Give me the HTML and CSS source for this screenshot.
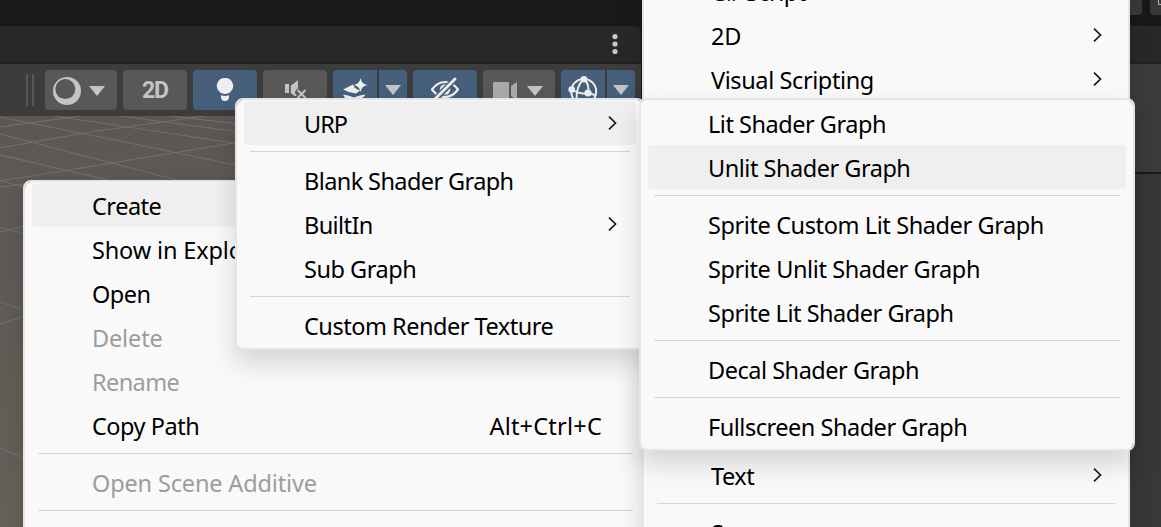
FILE: index.html
```html
<!DOCTYPE html>
<html lang="en">
<head>
<meta charset="utf-8">
<title>Scene</title>
<link rel="stylesheet" href="styles.css">
</head>
<body>
<div class="editor">
  <div class="scene-pane">
    <div class="pane-top"></div>
    <div class="tab-bar">
      <svg class="kebab" width="6" height="20" viewBox="0 0 6 20" fill="#c8c8c8"><circle cx="3" cy="2.6" r="2.6"/><circle cx="3" cy="10" r="2.6"/><circle cx="3" cy="17.5" r="2.6"/></svg>
    </div>
    <div class="toolbar">
      <div class="grip"></div>
      <div class="tool shading">
        <svg width="28" height="28" viewBox="0 0 28 28"><circle cx="14" cy="14" r="14" fill="#c4c4c4"/><circle cx="12.300" cy="12.100" r="10" fill="#585858"/></svg>
        <i class="caret"></i>
      </div>
      <div class="tool mode">2D</div>
      <div class="tool on light">
        <svg width="18" height="24" viewBox="0 0 18 24" fill="#eee"><path d="M9 0a8 8 0 0 1 5.2 14.2Q12 16 9 16t-5.200-1.800A8 8 0 0 1 9 0zM5 17.200q4 1.400 8 0v2.300Q12.500 23 9 23t-4-3.500z"/></svg>
      </div>
      <div class="tool audio">
        <svg width="24" height="24" viewBox="0 0 24 24"><path d="M1 5h4v9H1zM6.800 6.500 10.500 4 14 1v8.500Q11 11 11 14l2 3-2.500 0-3.700-3z" fill="#c4c4c4"/><path d="m13.500 11 8 8m0-8-8 8" stroke="#c4c4c4" stroke-width="2" fill="none"/></svg>
      </div>
      <div class="split">
        <div class="tool on fx">
          <svg width="26" height="26" viewBox="0 0 26 26"><path d="M17.500 0q1 6 7 7-6 1-7 7-1-6-7-7 6-1 7-7zM0 11.500 10 6.500q1.500 4.500 7 6L13 15.500Q6 15 0 11.500zM0 16.500q5 .5 11 3 6-2.500 11-3 0 2-3.500 3.500H14l-3 3-9-3z" fill="#eee"/></svg>
        </div>
        <div class="tool on drop"><i class="caret"></i></div>
      </div>
      <div class="tool on eye">
        <svg width="28" height="24" viewBox="0 0 28 24" fill="none" stroke="#eee" stroke-width="2.200"><path d="M1 12.500q5.500-7.500 13-7.500t13 7.500q-5.500 7.500-13 7.500T1 12.500z"/><circle cx="14" cy="12.500" r="5.200" fill="#eee" stroke="none"/><path d="M3.500 23 24 2" stroke="#46607c" stroke-width="6"/><path d="M3 23 24 2" stroke-width="2.800" stroke-linecap="round"/></svg>
      </div>
      <div class="tool cam">
        <svg width="25" height="18" viewBox="0 0 25 18" fill="#aaa"><rect width="16" height="18" rx="1"/><path d="m18 4 6-4v18l-6-4z"/></svg>
        <i class="caret"></i>
      </div>
      <div class="split">
        <div class="tool on gizmo">
          <svg width="30" height="30" viewBox="0 0 30 30" fill="none" stroke="#eee" stroke-width="2"><circle cx="15.700" cy="15.500" r="12.500"/><path d="M16 3q6 6 4 14-8 2-16.500-4M16 3Q8 9 8.500 25M20 17l7 2"/><g fill="#eee" stroke="none"><circle cx="16" cy="3.300" r="3.300"/><circle cx="3.700" cy="13.500" r="3.300"/><circle cx="20" cy="17" r="3.600"/></g></svg>
        </div>
        <div class="tool on drop"><i class="caret"></i></div>
      </div>
    </div>
    <svg class="viewport" width="642" height="411" viewBox="0 116 642 411">
      <g stroke="#7c7a78" fill="none" stroke-width="1" opacity=".7">
        <path d="M0 117 110 139 240 166M0 134 177 180M0 155 24 160M0 155 108 180M55 116 240 144M120 116 240 132"/>
        <path d="M0 127 80 116M0 148 90 132 205 116M0 181 87 167 240 142M24 184 0 187M170 116 240 124M0 180 24 188M0 227 24 234M0 232 24 226M0 302 24 310M0 324 24 316M0 448 24 458"/>
      </g>
    </svg>
  </div>
  <div class="side-pane">
    <div class="side-top"><span></span><span><i></i></span></div>
    <div class="side-tab"></div>
    <div class="side-body"></div>
    <div class="side-rest"></div>
  </div>
</div>

<div class="menu context">
  <div class="item hot"><span>Create</span></div>
  <div class="item"><span class="loose">Show in Explorer</span></div>
  <div class="item"><span>Open</span></div>
  <div class="item off"><span class="loose">Delete</span></div>
  <div class="item off"><span class="tight">Rename</span></div>
  <div class="item"><span>Copy Path</span><span class="keys">Alt+Ctrl+C</span></div>
  <hr>
  <div class="item off"><span class="loose">Open Scene Additive</span></div>
  <hr>
</div>

<div class="menu create">
  <div class="item"><span>C# Script</span></div>
  <div class="item"><span class="loose">2D</span><svg class="chev" viewBox="0 0 9 14"><path d="m1 .7 6.500 6.300L1 13.300"/></svg></div>
  <div class="item"><span class="snug">Visual Scripting</span><svg class="chev" viewBox="0 0 9 14"><path d="m1 .7 6.500 6.300L1 13.300"/></svg></div>
  <div class="covered"></div>
  <div class="item"><span>Text</span><svg class="chev" viewBox="0 0 9 14"><path d="m1 .7 6.500 6.300L1 13.300"/></svg></div>
  <hr>
  <div class="item"><span>Scene</span></div>
</div>

<div class="menu shader">
  <div class="item hot"><span class="caps">URP</span><svg class="chev" viewBox="0 0 9 14"><path d="m1 .7 6.500 6.300L1 13.300"/></svg></div>
  <hr>
  <div class="item"><span class="tight">Blank Shader Graph</span></div>
  <div class="item"><span class="tight">BuiltIn</span><svg class="chev" viewBox="0 0 9 14"><path d="m1 .7 6.500 6.300L1 13.300"/></svg></div>
  <div class="item"><span>Sub Graph</span></div>
  <hr>
  <div class="item"><span>Custom Render Texture</span></div>
</div>

<div class="menu urp">
  <div class="item"><span>Lit Shader Graph</span></div>
  <div class="item hot"><span>Unlit Shader Graph</span></div>
  <hr>
  <div class="item"><span class="snug">Sprite Custom Lit Shader Graph</span></div>
  <div class="item"><span class="snug">Sprite Unlit Shader Graph</span></div>
  <div class="item"><span>Sprite Lit Shader Graph</span></div>
  <hr>
  <div class="item"><span>Decal Shader Graph</span></div>
  <hr>
  <div class="item"><span>Fullscreen Shader Graph</span></div>
</div>
</body>
</html>
```

FILE: styles.css
```css
* { box-sizing: border-box; }
html { height: 527px; overflow: hidden; }
body {
  margin: 0;
  width: 1161px;
  height: 527px;
  overflow: hidden;
  position: relative;
  background: #191919;
  font-family: "Noto Sans", "Open Sans", sans-serif;
}
.editor { display: flex; height: 527px; gap: 2px; }
.scene-pane { width: 641px; display: flex; flex-direction: column; flex: none; }
.pane-top { height: 26px; }
.tab-bar {
  height: 38px;
  background: #282828;
  border-bottom: 2px solid #222;
  border-top-right-radius: 6px;
  display: flex;
  justify-content: flex-end;
  padding: 8px 23px 0 0;
}
.toolbar {
  height: 52px;
  background: #3c3c3c;
  display: flex;
  gap: 6px;
  padding: 6px 0 0 26px;
}
.grip {
  width: 8px;
  height: 32px;
  margin: 4px 5px 0 0;
  border: solid #585858;
  border-width: 0 2px;
}
.tool {
  height: 40px;
  background: #585858;
  border-radius: 4px;
  display: flex;
  align-items: center;
  flex: none;
}
.tool.on { background: #46607c; }
.shading { width: 72px; padding: 2px 0 0 8px; gap: 8px; }
.mode {
  width: 64px;
  justify-content: center;
  font: bold 23px Roboto, sans-serif;
  letter-spacing: -1px;
  color: #c4c4c4;
}
.light { width: 64px; align-items: flex-start; padding: 8px 0 0 23px; }
.audio { width: 64px; align-items: flex-start; padding: 9px 0 0 21px; }
.split { display: flex; gap: 2px; }
.fx { width: 44px; align-items: flex-start; padding: 8px 0 0 10px; border-radius: 4px 0 0 4px; }
.gizmo { width: 44px; align-items: flex-start; padding: 6px 0 0 7px; border-radius: 4px 0 0 4px; }
.drop { width: 28px; justify-content: center; border-radius: 0 4px 4px 0; }
.eye { width: 64px; align-items: flex-start; padding: 7px 0 0 18px; }
.cam { width: 72px; padding: 2px 0 0 10px; gap: 9px; }
.caret {
  border: solid transparent;
  border-width: 10px 8px 0;
  border-top-color: #c4c4c4;
}
.viewport { display: block; background: linear-gradient(#5d5754, #67615b); }
.side-pane { flex: 1; display: flex; flex-direction: column; }
.side-top { height: 26px; display: flex; justify-content: flex-end; gap: 8px; }
.side-top span { width: 32px; height: 15px; background: #383838; border-radius: 0 0 4px 4px; }
.side-top span:last-child {
  width: 11px;
  border-bottom-right-radius: 0;
  display: flex;
  justify-content: flex-end;
}
.side-top i { width: 3px; height: 5px; border: solid #b4b4b4; border-width: 0 0 1px 1px; }
.side-tab { height: 38px; background: #282828; border-bottom: 2px solid #222; }
.side-body { height: 110px; background: #3c3c3c; border-bottom: 2px solid #1a1a1a; }
.side-rest { flex: 1; background: #383838; }

/* Cascading menus float over the editor */
.menu {
  position: absolute;
  background: #f9f9f9;
  background-clip: padding-box;
  border: 2px solid #e5e5e5;
  border-radius: 8px;
  padding: 1px 7px;
  box-shadow: 0 13px 26px rgba(0, 0, 0, .15);
  color: #000;
}
.context { left: 23px; top: 180px; width: 625px; height: 360px; }
.create { left: 642px; top: -34px; width: 488px; }
.shader { left: 235px; top: 98px; width: 410px; }
.urp { left: 639px; top: 98px; width: 496px; }
.item {
  height: 44px;
  display: flex;
  align-items: center;
  padding: 1px 19px 0 60px;
  border-radius: 4px;
  font-size: 23.5px;
  line-height: 32px;
  letter-spacing: -.48px;
  white-space: pre;
}
.item.hot { background: #efefef; }
.item.off { color: #9d9d9d; }
.loose { letter-spacing: -.15px; }
.snug { letter-spacing: -.4px; }
.tight { letter-spacing: -.6px; }
.caps { letter-spacing: -1px; }
.keys { margin-left: auto; padding-right: 18px; letter-spacing: .22px; }
.menu hr { height: 1px; margin: 6px; border: 0; background: #d5d5d5; }
.chev {
  width: 9px;
  height: 14px;
  margin: -2px 0 0 auto;
  fill: none;
  stroke: #1a1a1a;
  stroke-width: 1.7;
}
.covered { height: 352px; }
```
